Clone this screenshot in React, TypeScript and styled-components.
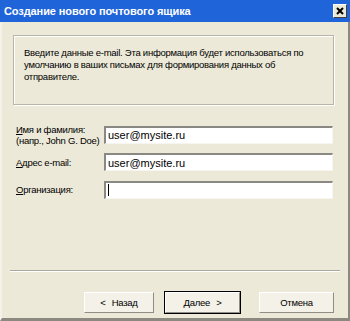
import styled, { createGlobalStyle } from 'styled-components'

const Global = createGlobalStyle`
  html, body {
    margin: 0;
    padding: 0;
    background: #ece9d8;
  }
  body {
    font-family: 'Liberation Sans', Arial, sans-serif;
    font-size: 9.5px;
    letter-spacing: -0.25px;
    color: #000;
  }
`

const Window = styled.div`
  width: 350px;
  height: 321px;
  box-sizing: border-box;
  background: #ece9d8;
  border-left: 2px solid #f4f2e8;
  border-right: 2px solid #8c8a80;
  border-bottom: 3px solid #8c8a80;
  display: flex;
  flex-direction: column;
`

const TitleBar = styled.div`
  height: 22px;
  margin-left: -2px;
  margin-right: -2px;
  background: #1f64d8;
  display: flex;
  align-items: center;
  justify-content: space-between;
  padding: 0 3px 0 4px;
`

const Title = styled.div`
  color: #fff;
  font-weight: bold;
  font-size: 11px;
  letter-spacing: -0.1px;
`

const CloseButton = styled.div`
  width: 14px;
  height: 14px;
  box-sizing: border-box;
  background: #ece9d8;
  border-top: 1px solid #fff;
  border-left: 1px solid #fff;
  border-right: 1px solid #404040;
  border-bottom: 1px solid #404040;
  display: flex;
  align-items: center;
  justify-content: center;
`

const Body = styled.div`
  flex: 1;
  display: flex;
  flex-direction: column;
  padding: 13px 14px 0 11px;
`

const InfoBox = styled.div`
  height: 70px;
  box-sizing: border-box;
  border: 1px solid #b8b5a6;
  box-shadow: inset 1px 1px 0 #fff, 1px 1px 0 #fff;
  padding: 11px 10px 0 10px;
  line-height: 12px;
`

const Form = styled.div`
  margin-top: 16px;
  display: flex;
  flex-direction: column;
  padding-left: 3px;
`

const Row = styled.div<{ $h?: number }>`
  height: ${(p) => p.$h ?? 27}px;
  display: flex;
  align-items: center;
`

const Label = styled.label`
  width: 88px;
  line-height: 11px;
  white-space: nowrap;
`

const Input = styled.div`
  width: 229px;
  height: 18px;
  box-sizing: border-box;
  background: #fff;
  border-top: 2px solid #8a8883;
  border-left: 2px solid #8a8883;
  border-right: 1px solid #f6f5ef;
  border-bottom: 1px solid #f6f5ef;
  font-size: 11px;
  letter-spacing: 0;
  padding-left: 2px;
  display: flex;
  align-items: center;
`

const Caret = styled.span`
  width: 1px;
  height: 12px;
  background: #000;
`

const Spacer = styled.div`
  flex: 1;
`

const Separator = styled.div`
  margin-left: -3px;
  margin-right: -6px;
  border-top: 1px solid #aca899;
  border-bottom: 1px solid #fff;
`

const Buttons = styled.div`
  display: flex;
  justify-content: flex-end;
  align-items: center;
  padding-top: 20px;
  height: 21px;
  margin-bottom: 5px;
`

const Button = styled.div<{ $default?: boolean; $gap?: number; $width?: number }>`
  width: ${(p) => p.$width ?? 75}px;
  height: 21px;
  box-sizing: border-box;
  margin-left: ${(p) => p.$gap ?? 0}px;
  display: flex;
  align-items: center;
  justify-content: center;
  background: #f3f1e8;
  border-top: 1px solid #fff;
  border-left: 1px solid #fff;
  border-right: 1px solid #8f8d86;
  border-bottom: 1px solid #8f8d86;
  outline: ${(p) => (p.$default ? '1px solid #000' : 'none')};
  gap: 6px;
`

export default function App() {
  return (
    <>
      <Global />
      <Window>
        <TitleBar>
          <Title>Создание нового почтового ящика</Title>
          <CloseButton>
            <svg width="8" height="8" viewBox="0 0 8 8">
              <path d="M1 1 L7 7 M7 1 L1 7" stroke="#000" strokeWidth="2" />
            </svg>
          </CloseButton>
        </TitleBar>
        <Body>
          <InfoBox>
            Введите данные e-mail. Эта информация будет использоваться по
            умолчанию в ваших письмах для формирования данных об
            отправителе.
          </InfoBox>
          <Form>
            <Row>
              <Label>
                <u>И</u>мя и фамилия:
                <br />
                (напр., John G. Doe)
              </Label>
              <Input>user@mysite.ru</Input>
            </Row>
            <Row $h={28}>
              <Label>
                <u>А</u>дрес e-mail:
              </Label>
              <Input>user@mysite.ru</Input>
            </Row>
            <Row>
              <Label>
                <u>О</u>рганизация:
              </Label>
              <Input>
                <Caret />
              </Input>
            </Row>
          </Form>
          <Spacer />
          <Separator />
          <Buttons>
            <Button $width={70}>
              <span>&lt;</span>
              <span>Назад</span>
            </Button>
            <Button $default $gap={11} $width={75}>
              <span>
                <u>Д</u>алее
              </span>
              <span>&gt;</span>
            </Button>
            <Button $gap={19}>Отмена</Button>
          </Buttons>
        </Body>
      </Window>
    </>
  )
}
